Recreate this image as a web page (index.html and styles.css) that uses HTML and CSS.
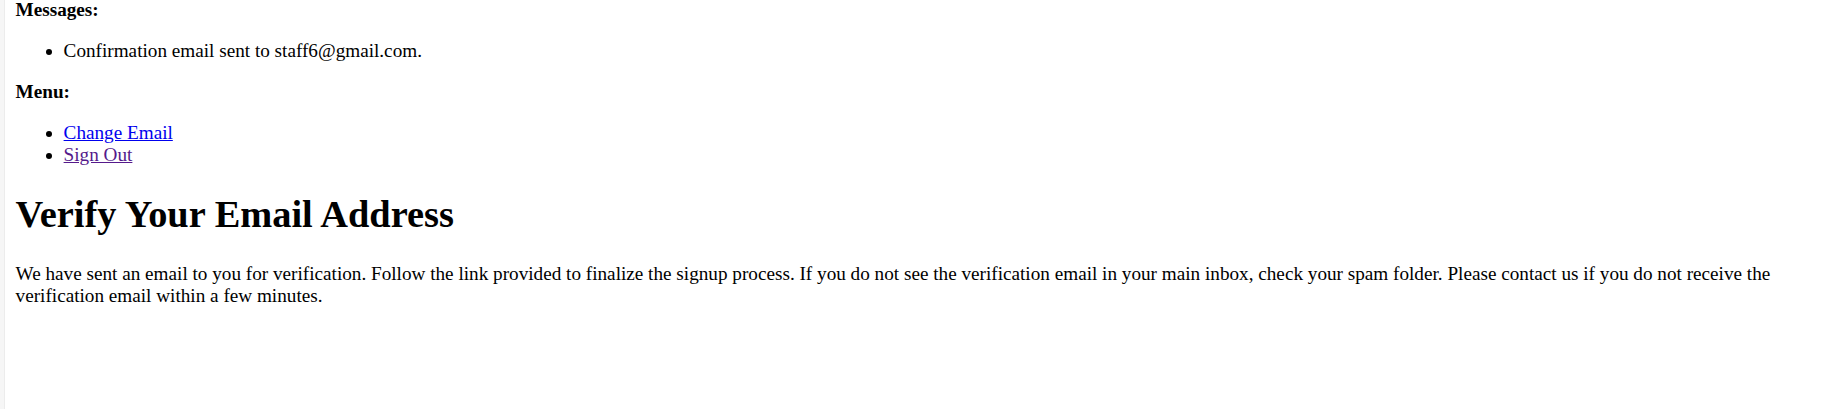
FILE: index.html
```html
<!DOCTYPE html>
<html>
<head>
<meta charset="utf-8">
<title>Verify Your Email Address</title>
<link rel="stylesheet" href="styles.css">
</head>
<body>
<div class="frame">
  <div class="page">
    <p class="label first"><strong>Messages:</strong></p>
    <ul class="list">
      <li>Confirmation email sent to staff6@gmail.com.</li>
    </ul>
    <p class="label"><strong>Menu:</strong></p>
    <ul class="list">
      <li><a class="link" href="#">Change Email</a></li>
      <li><a class="link visited" href="#">Sign Out</a></li>
    </ul>
    <h1 class="title">Verify Your Email Address</h1>
    <p class="text">We have sent an email to you for verification. Follow the link provided to finalize the signup process. If you do not see the verification email in your main inbox, check your spam folder. Please contact us if you do not receive the verification email within a few minutes.</p>
  </div>
</div>
</body>
</html>
```
FILE: styles.css
```css
html, body {
  margin: 0;
  padding: 0;
  background: #ffffff;
  height: 100%;
}
body {
  font-family: "Liberation Serif", "Times New Roman", serif;
  font-size: 19.2px;
  color: #000000;
  overflow: hidden;
}
.frame {
  border-left: 4px solid #f6f6f6;
  min-height: 100%;
  box-sizing: border-box;
}
.page {
  border-left: 1px solid #ececec;
  padding: 0 9.6px 0 10.6px;
  min-height: 409px;
  box-sizing: border-box;
  display: flow-root;
}
.label {
  margin: 19.2px 0;
}
.label.first {
  margin-top: -1.5px;
}
.list {
  margin: 19.2px 0;
  padding-left: 48px;
}
.link {
  color: #0000ee;
}
.link.visited {
  color: #551a8b;
}
.title {
  font-size: 38.4px;
  margin: 25.7px 0 26.9px;
  font-weight: bold;
}
.text {
  margin: 19.2px 0;
}
```
